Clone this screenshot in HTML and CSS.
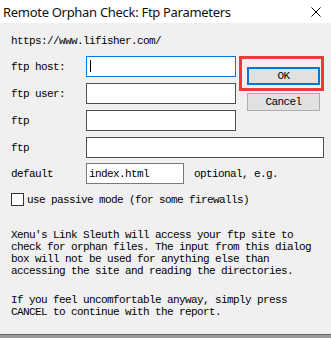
FILE: index.html
```html
<!DOCTYPE html>
<html lang="en">
<head>
<meta charset="UTF-8" />
<title>Remote Orphan Check: Ftp Parameters</title>
<link rel="stylesheet" href="styles.css">
</head>
<body>
  <div class="dialog">
    <div class="titlebar">
      <span class="title">Remote Orphan Check: Ftp Parameters</span>
      <svg class="close" width="10" height="10" viewBox="0 0 10 10">
        <path d="M0.5 0.5 L9.5 9.5 M9.5 0.5 L0.5 9.5" stroke="#000" stroke-width="1" fill="none"/>
      </svg>
    </div>

    <div class="content">
      <div class="url">https://www.lifisher.com/</div>

      <div class="form">
        <span class="lbl">ftp host:</span>
        <div class="field focus"><span class="caret"></span></div>
        <div class="buttons">
          <div class="mark"><button class="btn default">OK</button></div>
          <button class="btn">Cancel</button>
        </div>

        <span class="lbl">ftp user:</span>
        <div class="field"></div>

        <span class="lbl">ftp</span>
        <div class="field"></div>

        <span class="lbl">ftp</span>
        <div class="field wide"></div>

        <span class="lbl last">default</span>
        <div class="default-row last">
          <div class="field small">index.html</div>
          <span class="hint">optional, e.g.</span>
        </div>
      </div>

      <div class="check"><span class="box"></span>use passive mode (for some firewalls)</div>

      <p class="note">Xenu's Link Sleuth will access your ftp site to<br>check for orphan files. The input from this dialog<br>box will not be used for anything else than<br>accessing the site and reading the directories.</p>
      <p class="note second">If you feel uncomfortable anyway, simply press<br>CANCEL to continue with the report.</p>
    </div>
  </div>
</body>
</html>
```

FILE: styles.css
```css
body {
  margin: 0;
  background: #f0f0f0;
}
.dialog {
  width: 331px;
  height: 338px;
  background: #f0f0f0;
  font-family: "Liberation Mono", "DejaVu Sans Mono", monospace;
  font-size: 11px;
  letter-spacing: -0.6px;
  line-height: 12px;
  color: #000;
  box-sizing: border-box;
  border-bottom: 3px solid #9a9a9a;
  position: relative;
}
.dialog::after {
  content: "";
  position: absolute;
  left: 0;
  right: 0;
  bottom: 0;
  height: 1px;
  background: #646464;
}
.titlebar {
  height: 23px;
  background: #fff;
  display: flex;
  align-items: center;
  justify-content: space-between;
  padding: 0 10px 0 3px;
}
.title {
  font-family: "Noto Sans", "Open Sans", sans-serif;
  font-size: 13px;
  letter-spacing: -0.3px;
  color: #111;
}
.close {
  display: block;
}
.content {
  padding: 12px 9px 0 11px;
}
.url {
  height: 12px;
}
.form {
  margin-top: 9px;
  display: grid;
  grid-template-columns: 75px 150px 1fr;
  grid-auto-rows: 21px;
  row-gap: 6px;
}
.lbl {
  grid-column: 1;
  align-self: center;
}
.field {
  grid-column: 2;
  box-sizing: border-box;
  height: 21px;
  background: #fff;
  border: 1px solid #4e4e4e;
  padding: 3px 2px;
}
.field.focus {
  border-color: #0078d7;
}
.caret {
  display: block;
  width: 1px;
  height: 12px;
  margin-left: 1px;
  background: #000;
}
.field.wide {
  grid-column: 2 / 4;
}
.last {
  margin-top: -2px;
}
.default-row {
  grid-column: 2 / 4;
  display: flex;
  align-items: center;
  gap: 10px;
}
.field.small {
  width: 98px;
  border-color: #7a7a7a;
  padding: 4px 2px;
}
.buttons {
  grid-column: 3;
  grid-row: 1 / span 2;
  margin-left: 3px;
  width: 85px;
  display: flex;
  flex-direction: column;
  align-items: flex-start;
}
.mark {
  flex-shrink: 0;
  box-sizing: border-box;
  width: 85px;
  height: 35px;
  border: 3px solid #f0393b;
  padding: 8px 1px 3px 5px;
}
.btn {
  flex-shrink: 0;
  box-sizing: border-box;
  width: 73px;
  height: 18px;
  margin: 0;
  padding: 0;
  background: #e1e1e1;
  border: 1px solid #adadad;
  font: inherit;
  letter-spacing: -0.6px;
  color: #000;
}
.mark + .btn {
  margin: 2px 0 0 8px;
}
.btn.default {
  border: 2px solid #0078d7;
}
.check {
  margin-top: 8px;
  display: flex;
  align-items: center;
  gap: 3px;
  height: 13px;
}
.box {
  box-sizing: border-box;
  width: 13px;
  height: 13px;
  background: #fff;
  border: 1px solid #333;
}
.note {
  margin: 23px 0 0;
}
.note.second {
  margin-top: 17px;
}
```
